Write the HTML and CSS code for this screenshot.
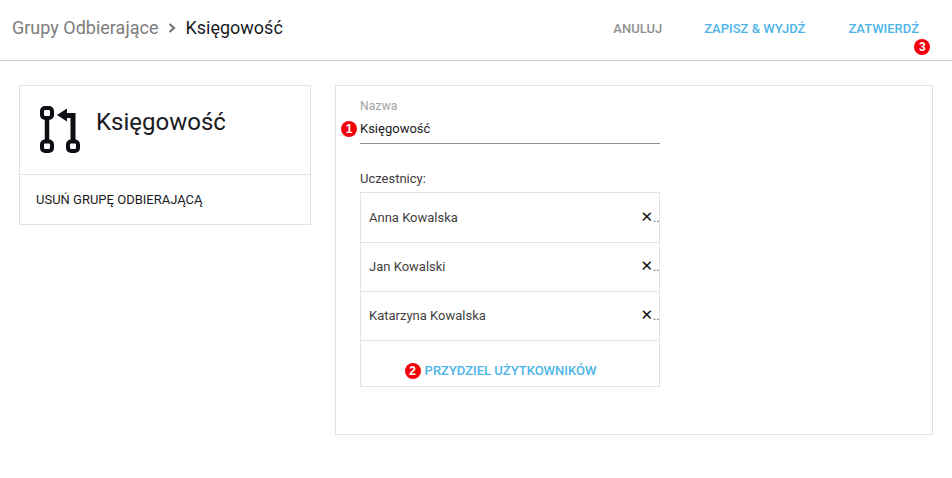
FILE: index.html
```html
<!DOCTYPE html>
<html lang="pl">
<head>
<meta charset="utf-8">
<title>Księgowość</title>
<link rel="stylesheet" href="styles.css">
</head>
<body>
<header class="topbar">
  <nav class="crumbs">
    <span class="crumb-parent">Grupy Odbierające</span>
    <svg class="crumb-sep" width="8" height="10" viewBox="0 0 8 10"><path d="M1.5 1 L6 5 L1.5 9" fill="none" stroke="#757575" stroke-width="2.2"/></svg>
    <span class="crumb-current">Księgowość</span>
  </nav>
  <div class="actions">
    <span class="action action-muted">ANULUJ</span>
    <span class="action">ZAPISZ &amp; WYJDŹ</span>
    <span class="action action-badged">ZATWIERDŹ<span class="badge badge-submit">3</span></span>
  </div>
</header>
<main class="content">
  <aside class="side-card">
    <div class="side-head">
      <svg class="group-icon" width="42" height="50" viewBox="0 0 42 50">
        <g fill="none" stroke="#0d0d14" stroke-width="4">
          <rect x="2" y="3" width="10" height="10" rx="3"/>
          <rect x="2" y="36.5" width="10" height="9.5" rx="3"/>
          <rect x="28" y="36.5" width="10" height="9.5" rx="3"/>
        </g>
        <path d="M7 13 V36" stroke="#0d0d14" stroke-width="4.5"/>
        <path d="M33 36 V10.5 H24" fill="none" stroke="#0d0d14" stroke-width="5"/>
        <path d="M17 10 L27 3.5 V16.5 Z" fill="#0d0d14"/>
      </svg>
      <h1 class="side-title">Księgowość</h1>
    </div>
    <div class="side-action">USUŃ GRUPĘ ODBIERAJĄCĄ</div>
  </aside>
  <section class="form-card">
    <div class="form-col">
      <div class="field-label">Nazwa</div>
      <div class="field-value"><span class="badge badge-name">1</span>Księgowość</div>
      <div class="members-label">Uczestnicy:</div>
      <div class="members">
        <div class="member"><span>Anna Kowalska</span><span class="remove"><span class="remove-x">✕</span><span class="remove-dots">..</span></span></div>
        <div class="member"><span>Jan Kowalski</span><span class="remove"><span class="remove-x">✕</span><span class="remove-dots">..</span></span></div>
        <div class="member"><span>Katarzyna Kowalska</span><span class="remove"><span class="remove-x">✕</span><span class="remove-dots">..</span></span></div>
        <div class="assign"><span class="badge badge-assign">2</span>PRZYDZIEL UŻYTKOWNIKÓW</div>
      </div>
    </div>
  </section>
</main>
</body>
</html>
```
FILE: styles.css
```css
* { box-sizing: border-box; }
html, body { margin: 0; height: 100%; }
body {
  background: #fff;
  font-family: Roboto, "Liberation Sans", sans-serif;
  color: #1b1b1f;
  overflow: hidden;
}
.topbar {
  height: 61px;
  border-bottom: 1px solid #c9c9c9;
  display: flex;
  justify-content: space-between;
  align-items: center;
  padding: 0 33px 5px 12px;
}
.crumbs { display: flex; align-items: center; font-size: 18px; }
.crumb-parent { color: #7d7d7d; }
.crumb-sep { margin: 1px 9px 0 10px; }
.crumb-current { color: #1b1b1f; }
.actions { display: flex; gap: 43px; font-size: 13px; font-weight: 500; color: #4db4e8; padding-top: 2px; }
.action-muted { color: #8f8f8f; margin-right: -1px; }
.action-badged { position: relative; }
.badge {
  width: 16px;
  height: 16px;
  border-radius: 50%;
  background: #f5000a;
  color: #fff;
  font-family: "Liberation Sans", sans-serif;
  font-size: 12px;
  font-weight: 700;
  line-height: 16px;
  text-align: center;
  display: inline-block;
}
.badge-submit { position: absolute; left: 66px; top: 18px; }
.badge-name { position: absolute; left: -19px; top: 7px; }
.badge-assign { margin-right: 4px; }
.content { display: flex; align-items: flex-start; gap: 24px; padding: 24px 19px 0; }
.side-card { width: 292px; height: 140px; border: 1px solid #e3e3e3; }
.side-head { height: 89px; border-bottom: 1px solid #e3e3e3; display: flex; padding: 19px 0 0 20px; }
.group-icon { flex: none; }
.side-title { margin: 3px 0 0 14px; font-size: 24px; font-weight: 400; line-height: 28px; color: #1b1b1f; }
.side-action { font-size: 13px; padding: 17px 0 0 16px; line-height: 16px; }
.form-card { width: 598px; height: 350px; border: 1px solid #e3e3e3; padding: 13px 0 0 24px; }
.form-col { width: 300px; }
.field-label { font-size: 12px; color: #a2a2a2; line-height: 14px; letter-spacing: 0.2px; }
.field-value {
  position: relative;
  height: 30px;
  margin-top: 1px;
  padding-top: 7px;
  font-size: 13px;
  line-height: 16px;
  border-bottom: 1px solid #8e8e8e;
  color: #1b1b1f;
}
.members-label { margin-top: 27px; font-size: 13px; line-height: 15px; color: #3c3c3c; }
.members { margin-top: 6px; border: 1px solid #e3e3e3; }
.member {
  height: 49px;
  border-bottom: 1px solid #e3e3e3;
  display: flex;
  align-items: center;
  justify-content: space-between;
  padding: 0 0 2px 8px;
  font-size: 13px;
  color: #424242;
}
.member:first-child { height: 50px; padding-bottom: 1px; }
.remove { display: flex; align-items: baseline; }
.remove-x { font-size: 15px; line-height: 16px; color: #111; font-family: "DejaVu Sans", sans-serif; }
.remove-dots { font-size: 12px; line-height: 16px; color: #555; width: 6px; overflow: hidden; }
.assign {
  height: 45px;
  display: flex;
  align-items: center;
  justify-content: center;
  padding: 14px 19px 0 0;
  font-size: 13px;
  font-weight: 500;
  color: #4db4e8;
}
```
